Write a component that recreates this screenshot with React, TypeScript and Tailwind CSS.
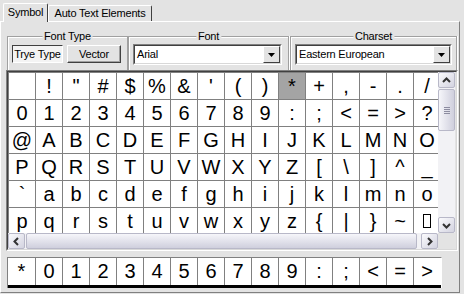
import type { ReactNode } from "react";

const ROWS: string[][] = [
  [" ", "!", '"', "#", "$", "%", "&", "'", "(", ")", "*", "+", ",", "-", ".", "/"],
  "0123456789:;<=>?".split(""),
  "@ABCDEFGHIJKLMNO".split(""),
  "PQRSTUVWXYZ[\\]^_".split(""),
  "`abcdefghijklmno".split(""),
  [..."pqrstuvwxyz{|}~".split(""), "DEL"],
];

const PREVIEW = "*0123456789:;<=>".split("");

function Arrow({ dir }: { dir: "up" | "down" | "left" | "right" }) {
  const pts = {
    up: "4,9 7.5,5.5 11,9",
    down: "4,6 7.5,9.5 11,6",
    left: "9,4 5.5,7.5 9,11",
    right: "6,4 9.5,7.5 6,11",
  }[dir];
  return (
    <svg width="15" height="15" viewBox="0 0 15 15">
      <polyline points={pts} fill="none" stroke="#333" strokeWidth="2" />
    </svg>
  );
}

function ScrollButton({ dir }: { dir: "up" | "down" | "left" | "right" }) {
  return (
    <div className="flex h-[16px] w-[17px] items-center justify-center rounded-[2px] border border-[#b8b8c8] bg-gradient-to-br from-[#fbfbfd] to-[#d3d3e0]">
      <Arrow dir={dir} />
    </div>
  );
}

function Group({ label, width, children }: { label: string; width: string; children: ReactNode }) {
  return (
    <div
      className={`relative h-[34px] ${width} border border-b-0 border-[#a0a0a0] shadow-[inset_1px_1px_0_#ffffff,1px_0_0_#ffffff]`}
    >
      <span className="absolute -top-[7px] left-1/2 -translate-x-1/2 bg-[#e3e3e3] px-[2px] leading-[12px] whitespace-nowrap">
        {label}
      </span>
      {children}
    </div>
  );
}

function Combo({ value, width }: { value: string; width: string }) {
  return (
    <div className={`${width} h-[21px] border border-t-[#808080] border-l-[#808080] border-r-white border-b-white`}>
      <div className="flex h-full items-center border border-t-[#404040] border-l-[#404040] border-r-[#d8d8d8] border-b-[#d8d8d8] bg-white">
        <span className="flex-1 pl-[2px] leading-none text-black">{value}</span>
        <div className="flex h-[17px] w-[17px] items-center justify-center border border-t-white border-l-white border-r-[#404040] border-b-[#404040] bg-[#e3e3e3]">
          <svg width="7" height="4" viewBox="0 0 7 4">
            <polygon points="0,0 7,0 3.5,4" fill="#000" />
          </svg>
        </div>
      </div>
    </div>
  );
}

export default function App() {
  return (
    <div className="h-[294px] w-[464px] overflow-hidden bg-[#e3e3e3] font-['Liberation_Sans',Arial,sans-serif] text-[11px] tracking-[-0.2px] text-black">
      {/* tabs */}
      <div className="flex h-[21px] items-end pl-[3px]">
        <div className="relative z-10 -mb-px flex h-[19px] w-[45px] items-center justify-center rounded-t-[2px] border border-b-0 border-t-white border-l-white border-r-[#404040] bg-[#e3e3e3] pb-[1px]">
          Symbol
        </div>
        <div className="flex h-[16px] w-[104px] items-center justify-center rounded-t-[2px] border border-b-0 border-t-white border-l-white border-r-[#404040]">
          Auto Text Elements
        </div>
      </div>

      {/* panel */}
      <div className="h-[272px] w-[460px] border border-t-white border-l-white border-r-[#808080] border-b-[#808080]">
        <div className="ml-[6px] mt-[14px] flex">
          <Group label="Font Type" width="w-[121px]">
            <div className="ml-[4px] mt-[8px] flex gap-[4px]">
              <div className="flex h-[18px] w-[51px] items-center justify-center border border-t-[#404040] border-l-[#404040] border-r-white border-b-white bg-[#f4f4f4]">
                Trye Type
              </div>
              <div className="flex h-[18px] w-[54px] items-center justify-center border border-t-white border-l-white border-r-[#404040] border-b-[#404040] bg-[#e3e3e3] shadow-[inset_-1px_-1px_0_#a0a0a0]">
                Vector
              </div>
            </div>
          </Group>
          <Group label="Font" width="w-[161px]">
            <div className="ml-[4px] mt-[7px]">
              <Combo value="Arial" width="w-[149px]" />
            </div>
          </Group>
          <div className="w-[1px]" />
          <Group label="Charset" width="w-[167px]">
            <div className="ml-[4px] mt-[7px]">
              <Combo value="Eastern European" width="w-[157px]" />
            </div>
          </Group>
        </div>

        {/* symbol grid */}
        <div className="ml-[5px] w-[452px] border border-t-[#808080] border-l-[#808080] border-r-white border-b-white">
          <div className="border border-t-[#404040] border-l-[#404040] border-r-[#d8d8d8] border-b-[#d8d8d8]">
            <div className="flex">
              <div className="h-[161px] w-[430px] overflow-hidden bg-white">
                <div className="grid w-[440px] grid-cols-[repeat(16,27px)] font-['Liberation_Sans',Arial,sans-serif] text-[20px] tracking-normal">
                  {ROWS.flat().map((c, i) => (
                    <div
                      key={i}
                      className={`flex h-[27px] w-[27px] items-center justify-center border-l border-t border-[#808080] leading-[27px] ${
                        i === 10 ? "bg-[#a4a4a4]" : "bg-white"
                      }`}
                    >
                      {c === "DEL" ? <span className="block h-[14px] w-[8px] border border-black" /> : c}
                    </div>
                  ))}
                </div>
              </div>
              {/* vertical scrollbar */}
              <div className="flex h-[161px] w-[17px] flex-col items-center bg-[#f2f2f5]">
                <ScrollButton dir="up" />
                <div className="mt-[1px] flex h-[42px] w-[17px] items-center justify-center rounded-[2px] border border-[#b8b8c8] bg-gradient-to-r from-[#f6f6fa] to-[#cfcfdd]">
                  <div className="flex flex-col gap-[1px]">
                    <div className="h-px w-[6px] bg-[#8c8ca0]" />
                    <div className="h-px w-[6px] bg-[#8c8ca0]" />
                    <div className="h-px w-[6px] bg-[#8c8ca0]" />
                    <div className="h-px w-[6px] bg-[#8c8ca0]" />
                  </div>
                </div>
                <div className="flex-1" />
                <ScrollButton dir="down" />
              </div>
            </div>
            {/* horizontal scrollbar */}
            <div className="flex h-[16px]">
              <div className="flex w-[430px] bg-[#f2f2f5]">
                <ScrollButton dir="left" />
                <div className="ml-[1px] h-[16px] w-[391px] rounded-[2px] border border-[#b8b8c8] bg-gradient-to-b from-[#f6f6fa] to-[#cfcfdd]" />
                <div className="flex-1" />
                <ScrollButton dir="right" />
              </div>
              <div className="w-[17px] bg-[#e3e3e3]" />
            </div>
          </div>
        </div>

        {/* preview strip */}
        <div className="ml-[6px] mt-[6px] w-[435px] border border-t-[#808080] border-l-[#808080] border-r-white border-b-0">
          <div className="flex border-b-[3px] border-black bg-white font-['Liberation_Sans',Arial,sans-serif] text-[20px] tracking-normal">
            {PREVIEW.map((c, i) => (
              <div
                key={i}
                className={`flex h-[27px] w-[27px] items-center justify-center border-[#808080] leading-[27px] ${i === 0 ? "" : "border-l"}`}
              >
                {c}
              </div>
            ))}
          </div>
        </div>
      </div>
    </div>
  );
}
